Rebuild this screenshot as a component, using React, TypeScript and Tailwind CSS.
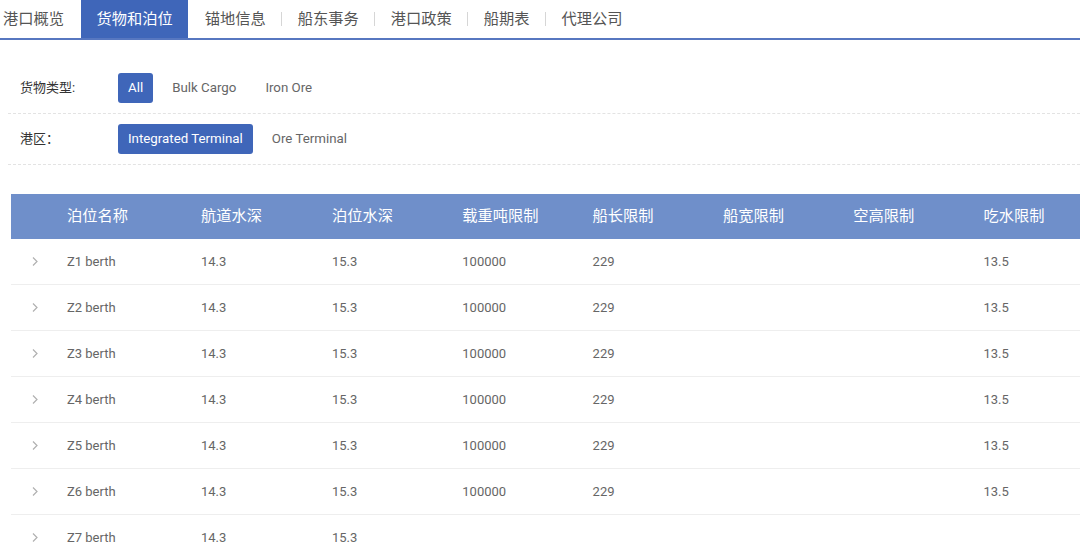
import React from 'react';

const TABS = ['港口概览', '货物和泊位', '锚地信息', '船东事务', '港口政策', '船期表', '代理公司'];
const ACTIVE = 1;

const COLUMNS = ['泊位名称', '航道水深', '泊位水深', '载重吨限制', '船长限制', '船宽限制', '空高限制', '吃水限制'];

const ROWS = [
  ['Z1 berth', '14.3', '15.3', '100000', '229', '', '', '13.5'],
  ['Z2 berth', '14.3', '15.3', '100000', '229', '', '', '13.5'],
  ['Z3 berth', '14.3', '15.3', '100000', '229', '', '', '13.5'],
  ['Z4 berth', '14.3', '15.3', '100000', '229', '', '', '13.5'],
  ['Z5 berth', '14.3', '15.3', '100000', '229', '', '', '13.5'],
  ['Z6 berth', '14.3', '15.3', '100000', '229', '', '', '13.5'],
  ['Z7 berth', '14.3', '15.3', '', '', '', '', ''],
];

const font = { fontFamily: 'Roboto, "Noto Sans CJK SC", sans-serif' };

function Chevron() {
  return (
    <svg width="8" height="11" viewBox="0 0 8 11" fill="none">
      <path d="M2 1.5 L6 5.5 L2 9.5" stroke="#b0b0b0" strokeWidth="1.2" />
    </svg>
  );
}

function FilterRow({ label, options, active }: { label: string; options: string[]; active: number }) {
  return (
    <div className="flex items-center h-[51px] border-b border-dashed border-[#e3e3e3] ml-[8px]">
      <div className="w-[110px] shrink-0 pl-[12px] text-[13px] text-[#333]">{label}</div>
      <div className="flex items-center gap-[9px]">
        {options.map((o, i) =>
          i === active ? (
            <span key={o} className="h-[30px] px-[10px] flex items-center rounded-[3px] bg-[#3f66b9] text-white text-[13.3px]">
              {o}
            </span>
          ) : (
            <span key={o} className="h-[30px] px-[10px] flex items-center text-[13.3px] text-[#666]">
              {o}
            </span>
          )
        )}
      </div>
    </div>
  );
}

const COL_W = [134, 131, 130.3, 130.3, 130.3, 130.3, 130.3, 130.3];

export default function App() {
  return (
    <div className="w-[1080px] h-[543px] overflow-hidden bg-white" style={font}>
      {/* tab bar */}
      <div className="flex items-stretch h-[40px] border-b-2 border-[#5777c0]">
        {TABS.map((t, i) => {
          const isActive = i === ACTIVE;
          const showSep = i > 0 && i !== ACTIVE && i - 1 !== ACTIVE;
          return (
            <React.Fragment key={t}>
              {i > 0 && (
                <div className="w-px flex items-center">
                  {showSep && <div className="w-px h-[14px] bg-[#d6d6d6]" />}
                </div>
              )}
              <div
                className={
                  'flex items-center text-[15.25px] ' +
                  (i === 0 ? 'pl-[3px] pr-[16px] ' : 'px-[15.5px] ') +
                  (isActive ? 'bg-[#3f66b9] text-white' : 'text-[#555]')
                }
              >
                {t}
              </div>
            </React.Fragment>
          );
        })}
      </div>

      {/* filters */}
      <div className="pt-[23px]">
        <FilterRow label="货物类型:" options={['All', 'Bulk Cargo', 'Iron Ore']} active={0} />
        <FilterRow label="港区：" options={['Integrated Terminal', 'Ore Terminal']} active={0} />
      </div>

      {/* table */}
      <div className="ml-[11px] mt-[29px]">
        <div className="flex items-center h-[45px] bg-[#6f8fca] text-white text-[15.25px]">
          <div className="w-[46px] shrink-0" />
          {COLUMNS.map((c, i) => (
            <div key={c} className="shrink-0 pl-[10px]" style={{ width: COL_W[i] }}>
              {c}
            </div>
          ))}
        </div>
        {ROWS.map((r) => (
          <div key={r[0]} className="flex items-center h-[46px] border-b border-[#eeeeee] text-[13px] text-[#666]">
            <div className="w-[46px] shrink-0 flex justify-center pl-[2px]">
              <Chevron />
            </div>
            {r.map((v, i) => (
              <div key={i} className="shrink-0 pl-[10px]" style={{ width: COL_W[i] }}>
                {v}
              </div>
            ))}
          </div>
        ))}
      </div>
    </div>
  );
}
